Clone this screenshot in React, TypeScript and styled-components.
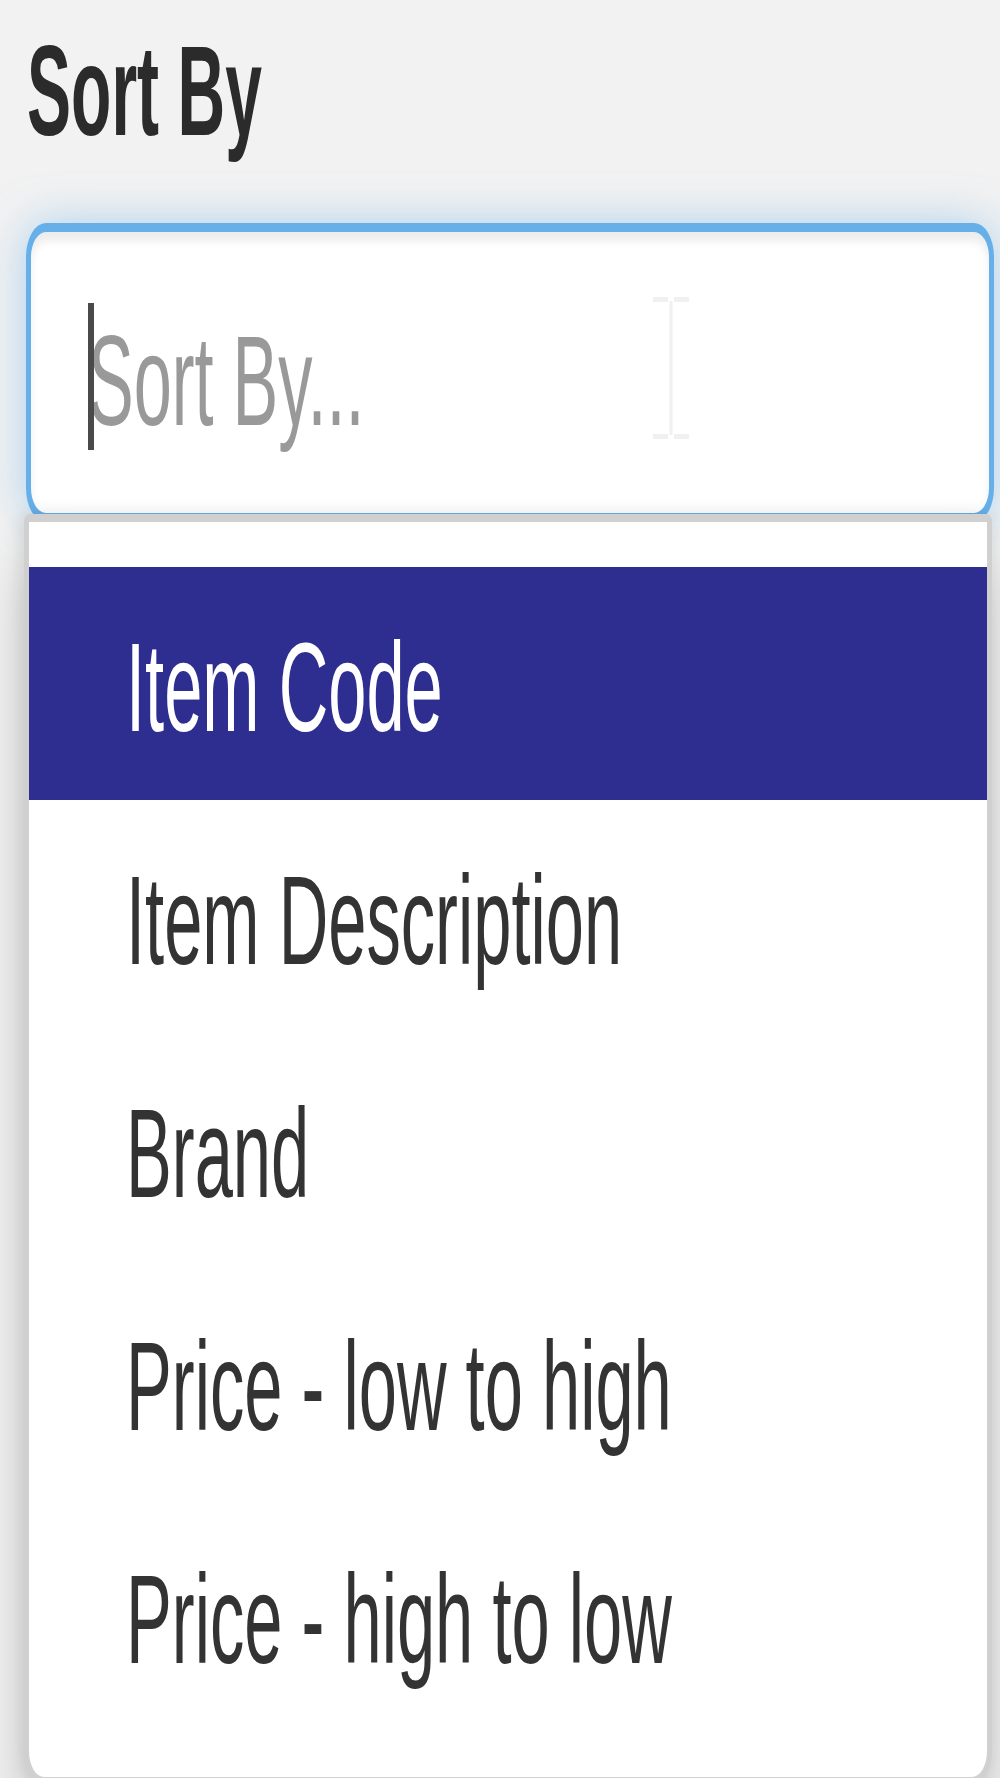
import React from 'react';
import styled, { createGlobalStyle } from 'styled-components';

// the shot is stretched: ~4.9x across, ~8.6x down, so text is squeezed on x
const FONT = '"Liberation Sans", Arial, Helvetica, sans-serif';
const FOCUS = '#66afe9';
const TEXT = '#333333';
const SELECTED = '#2d2e8f';

const GlobalStyle = createGlobalStyle`
  html, body { margin: 0; padding: 0; background: #f2f2f2; }
  body { font-family: ${FONT}; overflow: hidden; }
`;

const Page = styled.div`
  width: 1000px; height: 1778px; box-sizing: border-box; overflow: hidden;
  padding: 27px 6px 0 26px;
  display: flex; flex-direction: column;
  background: #f2f2f2;
  > * { flex: none; }
`;

const Squeeze = styled.span<{ $sx: number }>`
  display: inline-block; white-space: nowrap;
  transform: scaleX(${p => p.$sx}); transform-origin: 0 50%;
`;

const Label = styled.label`
  display: block; height: 128px; margin-left: 1px;
  font: bold 128px/128px ${FONT}; color: #2b2b2b;
`;

const Field = styled.div`
  position: relative; margin-top: 68px; height: 299px; box-sizing: border-box;
  display: flex; align-items: flex-start;
  padding: 71px 0 0 57px;
  background: #fff;
  border-style: solid; border-color: ${FOCUS}; border-width: 9px 5px;
  border-radius: 20px / 34px;
  box-shadow: inset 0 9px 9px rgba(0,0,0,.075), 0 0 44px rgba(102,175,233,.5);
  cursor: text;
`;

const Caret = styled.span`
  flex: none; width: 6px; height: 147px; margin-right: -6px;
  background: #4a4a4a; position: relative; z-index: 1;
`;

const Placeholder = styled.div`
  margin-top: 14px; font-size: 128px; line-height: 128px; color: #999;
`;

const Beam = styled.svg`
  position: absolute; left: 622px; top: 65px; width: 36px; height: 142px;
`;

const Menu = styled.ul`
  position: relative; z-index: 2; list-style: none; margin: -8px 0 0 -2px;
  width: 100%; box-sizing: border-box;
  padding: 45px 0;
  background: #fff;
  border-style: solid; border-color: #d0d0d0; border-width: 8px 5px;
  border-radius: 6px 6px 20px 20px / 8px 8px 34px 34px;
  box-shadow: 0 48px 60px rgba(0,0,0,.16), -3px 0 18px rgba(0,0,0,.1);
`;

const Option = styled.li<{ $active?: boolean }>`
  height: 233px; box-sizing: border-box; padding: 8px 0 0 97px;
  font-size: 126px; line-height: 225px; white-space: nowrap;
  color: ${p => p.$active ? '#fff' : TEXT};
  background: ${p => p.$active ? SELECTED : 'transparent'};
  cursor: pointer;
`;

const options = [
  'Item Code',
  'Item Description',
  'Brand',
  'Price - low to high',
  'Price - high to low',
];

export default function App() {
  const active = 0;
  return (
    <>
      <GlobalStyle />
      <Page>
        <Label htmlFor="sort-by"><Squeeze $sx={0.516}>Sort By</Squeeze></Label>
        <Field id="sort-by" role="combobox" aria-expanded="true">
          <Caret />
          <Placeholder><Squeeze $sx={0.535}>Sort By...</Squeeze></Placeholder>
          <Beam viewBox="0 0 36 142" aria-hidden="true">
            <g fill="#f0f0f0">
              <rect x="0" y="0" width="15" height="5" />
              <rect x="21" y="0" width="15" height="5" />
              <rect x="16.5" y="4" width="3" height="134" />
              <rect x="0" y="137" width="15" height="5" />
              <rect x="21" y="137" width="15" height="5" />
            </g>
          </Beam>
        </Field>
        <Menu role="listbox">
          {options.map((o, i) => (
            <Option key={o} role="option" aria-selected={i === active} $active={i === active}>
              <Squeeze $sx={0.545}>{o}</Squeeze>
            </Option>
          ))}
        </Menu>
      </Page>
    </>
  );
}
